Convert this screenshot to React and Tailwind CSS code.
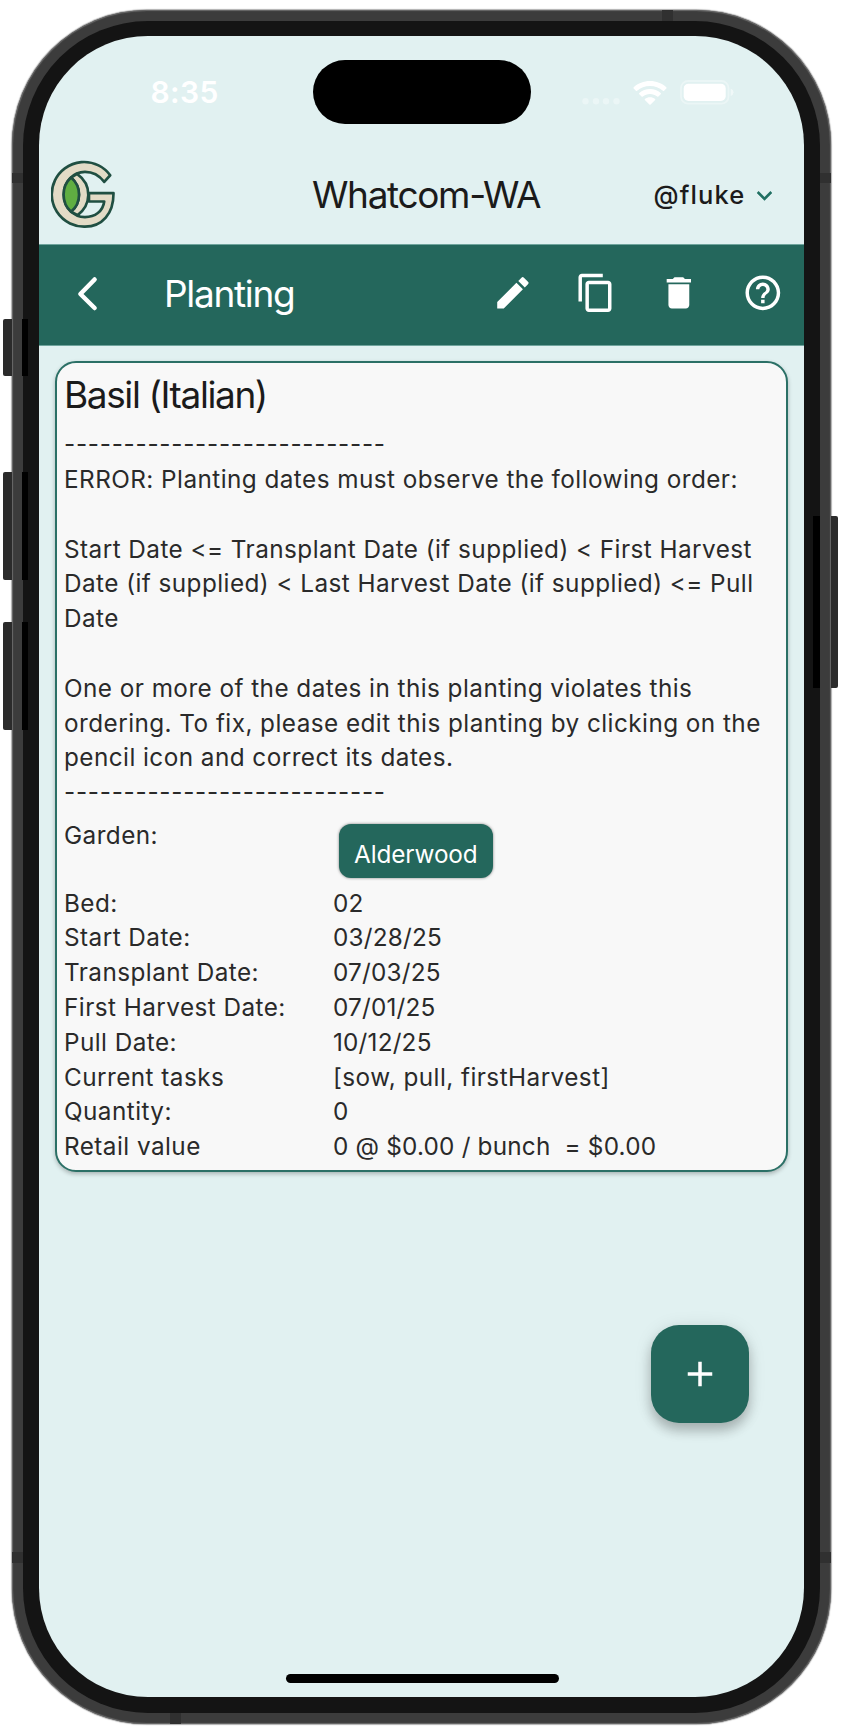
import { MdEdit, MdContentCopy, MdDelete, MdHelpOutline, MdExpandMore, MdAdd } from "react-icons/md";

const DASHES = "---------------------------";

const ROWS = [
  ["Bed:", "02"],
  ["Start Date:", "03/28/25"],
  ["Transplant Date:", "07/03/25"],
  ["First Harvest Date:", "07/01/25"],
  ["Pull Date:", "10/12/25"],
  ["Current tasks", "[sow, pull, firstHarvest]"],
  ["Quantity:", "0"],
  ["Retail value", "0 @ $0.00 / bunch  = $0.00"],
];

const MESSAGE = [
  "ERROR: Planting dates must observe the following order:",
  "",
  "Start Date <= Transplant Date (if supplied) < First Harvest",
  "Date (if supplied) < Last Harvest Date (if supplied) <= Pull",
  "Date",
  "",
  "One or more of the dates in this planting violates this",
  "ordering. To fix, please edit this planting by clicking on the",
  "pencil icon and correct its dates.",
].join("\n");

function Logo() {
  return (
    <svg viewBox="30 28 195 208" className="h-[69px] w-[65px]" stroke="#204f42" strokeWidth="8" strokeLinejoin="round">
      <path
        d="M208 74 A97.5 97.5 0 1 0 132 229 C184 229 218 190 218 128 H144 V153 H190 C186 183 162 200 132 200 C96 200 68 169 68 131 C68 94 96 64 132 64 C156 64 176 76 190 94 Z"
        fill="#e3dbc6"
      />
      <path d="M90 81 L108 70 C156 104 150 164 110 194 L90 184 C122 156 122 110 90 81 Z" fill="#e3dbc6" />
      <path d="M90 81 C60 108 60 157 90 184 C122 157 122 108 90 81 Z" fill="#60ae42" />
    </svg>
  );
}

function StatusBar() {
  return (
    <div className="flex h-[112px] shrink-0 items-start pt-[24px] text-white">
      <div className="w-[273.500px] pl-[111.500px] pt-[14px] text-[30px] leading-[36px] font-semibold tracking-[0.4px]">8:35</div>
      <div className="h-[64px] w-[218px] rounded-full bg-black" />
      <div className="ml-[51px] flex items-center pt-[20px]">
        <svg width="40" height="24" viewBox="0 0 40 24" fill="#fff" fillOpacity=".35">
          <circle cx="3.5" cy="20.3" r="3.2" />
          <circle cx="14" cy="20.3" r="3.2" />
          <circle cx="24" cy="20.3" r="3.2" />
          <circle cx="34.5" cy="20.3" r="3.2" />
        </svg>
        <svg className="ml-[11px]" width="34" height="24" viewBox="0 0 34 24" fill="#fff">
          <path d="M17 0 C10.700 0 5 2.300 .7 6.200 Q0 6.900 .7 7.600 L2.900 9.700 Q3.500 10.200 4.100 9.700 C7.600 6.700 12 5 17 5 C22 5 26.400 6.700 29.900 9.700 Q30.500 10.200 31.100 9.700 L33.300 7.600 Q34 6.900 33.300 6.200 C29 2.300 23.300 0 17 0 Z" />
          <path d="M17 8 C12.900 8 9.200 9.500 6.300 12 Q5.700 12.600 6.300 13.300 L8.600 15.500 Q9.200 16 9.800 15.500 C11.800 13.900 14.300 12.900 17 12.900 C19.700 12.900 22.200 13.900 24.200 15.500 Q24.800 16 25.400 15.500 L27.700 13.300 Q28.300 12.600 27.700 12 C24.800 9.500 21.100 8 17 8 Z" />
          <path d="M17 16.200 C15.100 16.200 13.300 16.800 11.900 17.900 Q11.400 18.400 11.900 19 L16.400 23.400 Q17 24 17.600 23.400 L22.100 19 Q22.600 18.400 22.100 17.900 C20.700 16.800 18.900 16.200 17 16.200 Z" />
        </svg>
        <svg className="ml-[13px]" width="54" height="25" viewBox="0 0 54 25">
          <rect x="1" y="1" width="47.500" height="22.700" rx="7" fill="none" stroke="#fff" strokeOpacity=".35" strokeWidth="1.800" />
          <rect x="3.700" y="3.700" width="42" height="17.300" rx="4.800" fill="#fff" />
          <path d="M50.700 8.500 Q53.500 9.500 53.500 12.300 Q53.500 15 50.700 16 Z" fill="#fff" fillOpacity=".5" />
        </svg>
      </div>
    </div>
  );
}

function ProfileBar() {
  return (
    <div className="flex h-[96px] shrink-0 items-start pl-[12px] text-[#1b1b1b]">
      <div className="w-[261px] pt-[12px]">
        <Logo />
      </div>
      <h1 className="w-[341.500px] pt-[23px] text-[37px] leading-[48px] tracking-[-1.350px]">Whatcom-WA</h1>
      <div className="flex items-center gap-[4px] pt-[30px]">
        <span className="text-[25.500px] leading-[34px] font-medium tracking-[1.100px]">@fluke</span>
        <MdExpandMore className="size-[31px] text-[#217063]" />
      </div>
    </div>
  );
}

function Toolbar() {
  return (
    <div className="flex h-[102px] shrink-0 items-start border-y border-[#6fa49d] bg-[#24675c] text-white">
      <svg className="mt-[30.500px] ml-[38px]" width="22" height="36" viewBox="0 0 22 36" fill="none" stroke="#fff" strokeWidth="4.500" strokeLinecap="round" strokeLinejoin="round">
        <path d="M17.600 3.500 L3.400 18 L17.600 32" />
      </svg>
      <h2 className="ml-[65px] w-[289px] pt-[25px] text-[37px] leading-[48px] tracking-[-1.300px]">Planting</h2>
      <div className="ml-[38.500px] flex gap-[41.800px] pt-[27px]">
        <MdEdit className="size-[41.700px]" />
        <MdContentCopy className="size-[41.700px]" />
        <MdDelete className="size-[41.700px]" />
        <MdHelpOutline className="size-[41.700px]" />
      </div>
    </div>
  );
}

function PlantingCard() {
  return (
    <div className="mx-[16px] mt-[15px] h-[811px] shrink-0 rounded-[21px] border-2 border-[#2b7066] bg-[#f8f8f8] pl-[7px] text-[24.300px] leading-[34.780px] tracking-[0.450px] text-[#2a2a2a] shadow-[0_2px_4px_rgba(0,0,0,0.25)]">
      <h3 className="pt-[8px] text-[37px] leading-[48px] tracking-[-1.400px] text-[#1b1b1b]">Basil (Italian)</h3>
      <p className="pt-[8.300px] tracking-[0.740px]">{DASHES}</p>
      <p className="whitespace-pre">{MESSAGE}</p>
      <p className="tracking-[0.740px]">{DASHES}</p>
      <div className="flex h-[75.800px] pt-[8px]">
        <div className="w-[269px]">Garden:</div>
        <div className="ml-[6px] mt-[6px] h-[54px] rounded-[12px] bg-[#24675c] px-[15px] pt-[13px] tracking-[-0.100px] text-white shadow-[0_0_3px_rgba(0,0,0,0.5)]">Alderwood</div>
      </div>
      {ROWS.map(([label, value]) => (
        <div key={label} className="flex whitespace-pre">
          <div className="w-[269px]">{label}</div>
          <div className={/^\d/.test(value) ? "tracking-[0.200px]" : ""}>{value}</div>
        </div>
      ))}
    </div>
  );
}

function SideHardware() {
  return (
    <>
      <div className="absolute top-[319px] left-[3px] h-[57px] w-[9px] rounded-l-[2px] bg-[#2b2b2b]" />
      <div className="absolute top-[319px] left-[22px] h-[57px] w-[6px] bg-black" />
      <div className="absolute top-[472px] left-[3px] h-[108px] w-[9px] rounded-l-[2px] bg-[#2b2b2b]" />
      <div className="absolute top-[472px] left-[22px] h-[108px] w-[6px] bg-black" />
      <div className="absolute top-[622px] left-[3px] h-[108px] w-[9px] rounded-l-[2px] bg-[#2b2b2b]" />
      <div className="absolute top-[622px] left-[22px] h-[108px] w-[6px] bg-black" />
      <div className="absolute top-[516px] left-[831px] h-[172px] w-[7px] rounded-r-[2px] bg-[#2b2b2b]" />
      <div className="absolute top-[516px] left-[813px] h-[172px] w-[7px] bg-black" />
      <div className="absolute top-[173px] left-[12px] h-[10px] w-[11px] bg-[#303030]" />
      <div className="absolute top-[173px] left-[820px] h-[10px] w-[11px] bg-[#303030]" />
      <div className="absolute top-[1552px] left-[12px] h-[11px] w-[11px] bg-[#303030]" />
      <div className="absolute top-[1552px] left-[820px] h-[11px] w-[11px] bg-[#303030]" />
      <div className="absolute top-[10px] left-[662px] h-[11px] w-[11px] bg-[#303030]" />
      <div className="absolute top-[1713px] left-[170px] h-[11px] w-[11px] bg-[#303030]" />
    </>
  );
}

export default function App() {
  return (
    <div className="relative h-[1727px] w-[851px] overflow-hidden bg-white pt-[10px] pl-[12px] font-['Inter',sans-serif]">
      <div className="h-[1714px] w-[819px] rounded-[135px] bg-[#3c3c3c] p-[11px] shadow-[0_0_1px_1px_#b0b0b0,inset_0_0_1px_1px_#6a6a6a]">
        <div className="h-[1692px] w-[797px] rounded-[125px] bg-[#141414] pt-[15px] pl-[16px]">
          <div className="relative flex h-[1661px] w-[765px] flex-col overflow-hidden rounded-[109px] bg-[#e1f1f1]">
            <StatusBar />
            <ProfileBar />
            <Toolbar />
            <PlantingCard />
            <button className="absolute top-[1289px] left-[612px] flex size-[98px] items-center justify-center rounded-[28px] bg-[#24675c] text-white shadow-[0_8px_12px_rgba(0,0,0,0.22),0_2px_18px_rgba(0,0,0,0.1)]">
              <MdAdd className="size-[42px]" />
            </button>
            <div className="mx-auto mt-auto mb-[14px] h-[9px] w-[273px] shrink-0 translate-x-px rounded-full bg-black" />
          </div>
        </div>
      </div>
      <SideHardware />
    </div>
  );
}
